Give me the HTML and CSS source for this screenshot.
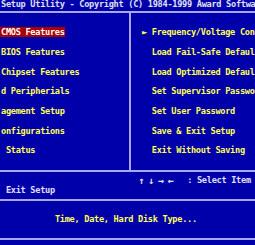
FILE: index.html
```html
<!DOCTYPE html>
<html lang="en">

<head>
    <meta charset="UTF-8">
    <meta name="viewport" content="width=device-width, initial-scale=1.0">
    <title>CMOS Setup Utility</title>
    <link rel="stylesheet" href="styles.css">
</head>

<body>
    <div class="tela">
        <div class="titulo">Setup Utility - Copyright (C) 1984-1999 Award Softwa</div>
        <div class="menu">
            <div class="coluna esquerda">
                <div class="item"><span class="ativo">CMOS Features</span></div>
                <div class="item">BIOS Features</div>
                <div class="item">Chipset Features</div>
                <div class="item">d Peripherials</div>
                <div class="item">agement Setup</div>
                <div class="item">onfigurations</div>
                <div class="item"> Status</div>
            </div>
            <div class="coluna direita">
                <div class="item"><span class="seta">►</span>Frequency/Voltage Con</div>
                <div class="item"><span class="seta"></span>Load Fail-Safe Defaul</div>
                <div class="item"><span class="seta"></span>Load Optimized Defaul</div>
                <div class="item"><span class="seta"></span>Set Supervisor Passwo</div>
                <div class="item"><span class="seta"></span>Set User Password</div>
                <div class="item"><span class="seta"></span>Save &amp; Exit Setup</div>
                <div class="item"><span class="seta"></span>Exit Without Saving</div>
            </div>
        </div>
        <div class="teclas">
            <div class="linha setas"><span class="flechas">↑ ↓ → ← </span>  : Select Item</div>
            <div class="linha"> Exit Setup</div>
        </div>
        <div class="ajuda">Time, Date, Hard Disk Type...</div>
    </div>
</body>

</html>
```

FILE: styles.css
```css
body {
    margin: 0;
    background-color: #0000aa;
    overflow: hidden;
}

/* one text cell = 4.9px wide, 9.85px high */
.tela {
    width: 255px;
    height: 245px;
    overflow: hidden;
    font-family: "DejaVu Sans Mono", monospace;
    font-weight: bold;
    font-size: 8.6px;
    letter-spacing: -0.28px;
    line-height: 9.85px;
    color: #ffff55;
}

.titulo {
    height: 11px;
    padding-left: 1px;
    white-space: pre;
    color: #e0e0f4;
}

.menu {
    display: grid;
    grid-template-columns: 131px 1fr;
    height: 161px;
    box-sizing: border-box;
    border-top: 2px solid #a8a8f0;
    border-bottom: 2px solid #a8a8f0;
}

.coluna {
    padding-top: 15.25px;
    overflow: hidden;
}

.esquerda {
    border-right: 2px solid #a8a8f0;
    padding-left: 1px;
}

.direita {
    padding-left: 11px;
}

.item {
    height: 9.85px;
    margin-bottom: 9.85px;
    white-space: pre;
}

.ativo {
    margin-left: -1px;
    padding-left: 1px;
    background-color: #a80000;
    color: #ffffff;
}

.seta {
    display: inline-block;
    width: 9.8px;
}

.teclas {
    height: 29px;
    box-sizing: border-box;
    padding-top: 4px;
    padding-left: 1px;
    border-bottom: 2px solid #a8a8f0;
    color: #e0e0f4;
}

.linha {
    height: 9.85px;
    white-space: pre;
}

.setas {
    padding-left: 137.2px;
}

.flechas {
    display: inline-block;
    width: 39.2px;
    height: 9.85px;
    vertical-align: top;
    font-size: 10px;
    letter-spacing: -1.12px;
}

.ajuda {
    height: 39px;
    box-sizing: border-box;
    padding-top: 14.25px;
    padding-left: 54.9px;
    border-bottom: 2px solid #a8a8f0;
    white-space: pre;
}
```
